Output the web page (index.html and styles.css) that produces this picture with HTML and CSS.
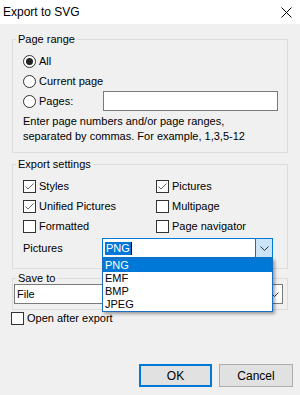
FILE: index.html
```html
<!DOCTYPE html>
<html>
<head>
  <title>Export to SVG</title>
  <link rel="stylesheet" href="styles.css">
</head>
<body>

  <div class="titlebar">
    <span class="caption">Export to SVG</span>
    <svg class="close" width="11" height="11" viewBox="0 0 11 11"><path d="M0.5 0.5 L10.5 10.5 M10.5 0.5 L0.5 10.5" stroke="#000" stroke-width="1" fill="none"/></svg>
  </div>

  <fieldset class="group range">
    <legend>Page range</legend>
    <div class="row"><span class="radio on"></span>All</div>
    <div class="row"><span class="radio"></span>Current page</div>
    <div class="row"><span class="radio"></span>Pages:<input type="text" class="pages"></div>
    <p class="hint">Enter page numbers and/or page ranges,<br>separated by commas. For example, 1,3,5-12</p>
  </fieldset>

  <fieldset class="group settings">
    <legend>Export settings</legend>
    <div class="checks">
      <div class="row"><span class="check on"><svg width="11" height="11" viewBox="0 0 11 11"><path d="M1.5 5.5 L4 8 L9.5 2.5" stroke="#666" stroke-width="1" fill="none"/></svg></span>Styles</div>
      <div class="row"><span class="check on"><svg width="11" height="11" viewBox="0 0 11 11"><path d="M1.5 5.5 L4 8 L9.5 2.5" stroke="#666" stroke-width="1" fill="none"/></svg></span>Pictures</div>
      <div class="row"><span class="check on"><svg width="11" height="11" viewBox="0 0 11 11"><path d="M1.5 5.5 L4 8 L9.5 2.5" stroke="#666" stroke-width="1" fill="none"/></svg></span>Unified Pictures</div>
      <div class="row"><span class="check"></span>Multipage</div>
      <div class="row"><span class="check"></span>Formatted</div>
      <div class="row"><span class="check"></span>Page navigator</div>
    </div>
    <div class="pictures">
      <span class="label">Pictures</span>
      <div class="combo active">
        <span class="value"><span class="sel">PNG</span><span class="caret"></span></span>
        <span class="drop"><svg width="9" height="5" viewBox="0 0 9 5"><path d="M0.5 0.5 L4.5 4.5 L8.5 0.5" stroke="#333" stroke-width="1" fill="none"/></svg></span>
        <ul class="list">
          <li class="current">PNG</li>
          <li>EMF</li>
          <li>BMP</li>
          <li>JPEG</li>
        </ul>
      </div>
    </div>
  </fieldset>

  <fieldset class="group saveto">
    <legend>Save to</legend>
    <div class="combo file">
      <span class="value">File</span>
      <span class="drop plain"><svg width="9" height="5" viewBox="0 0 9 5"><path d="M0.5 0.5 L4.5 4.5 L8.5 0.5" stroke="#333" stroke-width="1" fill="none"/></svg></span>
    </div>
  </fieldset>

  <div class="row open"><span class="check"></span>Open after export</div>

  <div class="buttons">
    <button class="default">OK</button>
    <button>Cancel</button>
  </div>

</body>
</html>
```

FILE: styles.css
```css
body {
  margin: 0;
  width: 300px;
  height: 395px;
  overflow: hidden;
  background-color: #f0f0f0;
  font-family: "Liberation Sans", Arial, sans-serif;
  font-size: 11px;
  color: #000;
}

.titlebar {
  height: 24px;
  background-color: #fff;
  display: flex;
  align-items: center;
  justify-content: space-between;
  padding: 0 8px 0 3px;
}

.caption {
  font-size: 12px;
}

.group {
  margin: 0 12px;
  border: 1px solid #dcdcdc;
  padding: 0 9px 0 10px;
  min-width: 0;
}

.group legend {
  line-height: 14px;
  padding: 0 2px;
  margin-left: -7px;
}

.range {
  margin-top: 8px;
  padding-top: 5px;
  padding-bottom: 8px;
}

.settings {
  margin-top: 4px;
  padding-top: 5px;
  padding-bottom: 10px;
}

.saveto {
  margin-top: 3px;
  padding: 0 4px 5px 1px;
}

.saveto legend {
  margin-left: 2px;
  line-height: 12px;
}

.row {
  display: flex;
  align-items: center;
  height: 20px;
  gap: 3px;
}

.radio {
  width: 13px;
  height: 13px;
  box-sizing: border-box;
  border: 1px solid #333;
  border-radius: 50%;
  background-color: #fff;
  display: flex;
  align-items: center;
  justify-content: center;
}

.radio.on::after {
  content: "";
  width: 7px;
  height: 7px;
  border-radius: 50%;
  background-color: #222;
}

.check {
  width: 13px;
  height: 13px;
  box-sizing: border-box;
  border: 1px solid #333;
  background-color: #fff;
  display: flex;
}

.pages {
  margin-left: auto;
  width: 175px;
  height: 20px;
  box-sizing: border-box;
  border: 1px solid #7a7a7a;
  background-color: #fff;
}

.hint {
  margin: 3px 0 0 0;
  line-height: 15px;
}

.checks {
  display: grid;
  grid-template-columns: 133px 1fr;
}

.pictures {
  display: flex;
  align-items: center;
  margin-top: 2px;
  height: 20px;
}

.label {
  width: 79px;
}

.combo {
  position: relative;
  display: flex;
  width: 171px;
  height: 20px;
  box-sizing: border-box;
  border: 1px solid #7a7a7a;
  background-color: #fff;
}

.combo.active {
  border-color: #0078d7;
}

.value {
  flex: 1;
  display: flex;
  align-items: center;
  padding-left: 2px;
}

.sel {
  background-color: #0078d7;
  color: #fff;
  line-height: 13px;
  padding: 0 1px;
}

.caret {
  width: 1px;
  height: 13px;
  background-color: #000;
}

.drop {
  width: 16px;
  display: flex;
  align-items: center;
  justify-content: center;
  background-color: #cce4f7;
  border: 1px solid #0078d7;
  margin: -1px -1px -1px 0;
}

.drop.plain {
  background-color: transparent;
  border: none;
  margin: 0;
}

.list {
  position: absolute;
  top: 19px;
  left: -1px;
  width: 171px;
  box-sizing: border-box;
  margin: 0;
  padding: 0;
  list-style: none;
  border: 1px solid #1a6fc0;
  background-color: #fff;
  box-shadow: 2px 2px 3px rgba(0, 0, 0, 0.35);
  z-index: 2;
}

.list li {
  height: 13px;
  line-height: 13px;
  padding-left: 2px;
}

.list li.current {
  background-color: #0078d7;
  color: #fff;
}

.file {
  width: 269px;
}

.open {
  margin: 0 0 0 11px;
  height: 16px;
}

.buttons {
  display: flex;
  justify-content: flex-end;
  gap: 7px;
  margin: 38px 7px 0 0;
}

button {
  width: 74px;
  height: 23px;
  font-family: "Liberation Sans", Arial, sans-serif;
  font-size: 12px;
  background-color: #e1e1e1;
  border: 1px solid #adadad;
  color: #000;
  padding: 0;
}

button.default {
  width: 73px;
  border: 2px solid #0078d7;
}
```
